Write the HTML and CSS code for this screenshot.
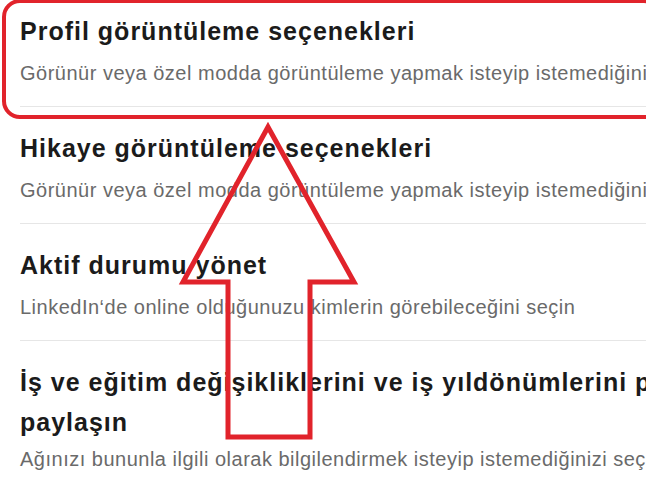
FILE: index.html
```html
<!DOCTYPE html>
<html lang="tr">
<head>
<meta charset="utf-8">
<title>Görünürlük</title>
<link rel="stylesheet" href="styles.css">
</head>
<body>
<div class="page">
  <ul class="settings">
    <li class="item">
      <h3 class="item-title">Profil görüntüleme seçenekleri</h3>
      <p class="item-desc">Görünür veya özel modda görüntüleme yapmak isteyip istemediğinizi seçin</p>
    </li>
    <li class="item">
      <h3 class="item-title">Hikaye görüntüleme seçenekleri</h3>
      <p class="item-desc">Görünür veya özel modda görüntüleme yapmak isteyip istemediğinizi seçin</p>
    </li>
    <li class="item">
      <h3 class="item-title">Aktif durumu yönet</h3>
      <p class="item-desc">LinkedIn‘de online olduğunuzu kimlerin görebileceğini seçin</p>
    </li>
    <li class="item item--wrap">
      <h3 class="item-title">İş ve eğitim değişikliklerini ve iş yıldönümlerini profilinizden paylaşın</h3>
      <p class="item-desc">Ağınızı bununla ilgili olarak bilgilendirmek isteyip istemediğinizi seçin</p>
    </li>
  </ul>
  <div class="highlight"></div>
  <svg class="arrow" width="646" height="479" viewBox="0 0 646 479" aria-hidden="true">
    <polygon points="268,127 354,282 310,282 310,437 228,437 228,282 183,282" />
  </svg>
</div>
</body>
</html>
```

FILE: styles.css
```css
html, body {
  margin: 0;
  padding: 0;
  background: #ffffff;
}

.page {
  position: relative;
  width: 646px;
  height: 479px;
  overflow: hidden;
  font-family: "Liberation Sans", Arial, sans-serif;
}

.settings {
  list-style: none;
  margin: -10px 0 0 0;
  padding: 0 0 0 20px;
  width: 900px;
}

.item {
  padding: 21px 0 21px 0;
  border-bottom: 1px solid #e6e6e6;
}

.item-title {
  margin: 0;
  font-size: 25px;
  line-height: 40px;
  font-weight: 700;
  letter-spacing: 1px;
  color: #1b1b1b;
  width: 830px;
}

.item-desc {
  margin: 10px 0 0 0;
  font-size: 20px;
  line-height: 24px;
  letter-spacing: 0.5px;
  color: #6a6a6a;
  white-space: nowrap;
}

.item--wrap .item-desc {
  margin-top: 5px;
}

.highlight {
  position: absolute;
  left: 2px;
  top: -1px;
  width: 660px;
  height: 120px;
  box-sizing: border-box;
  border: 4px solid #e1232b;
  border-radius: 18px;
}

.arrow {
  position: absolute;
  left: 0;
  top: 0;
}

.arrow polygon {
  fill: none;
  stroke: #e1232b;
  stroke-width: 5;
  stroke-linejoin: miter;
}
```
